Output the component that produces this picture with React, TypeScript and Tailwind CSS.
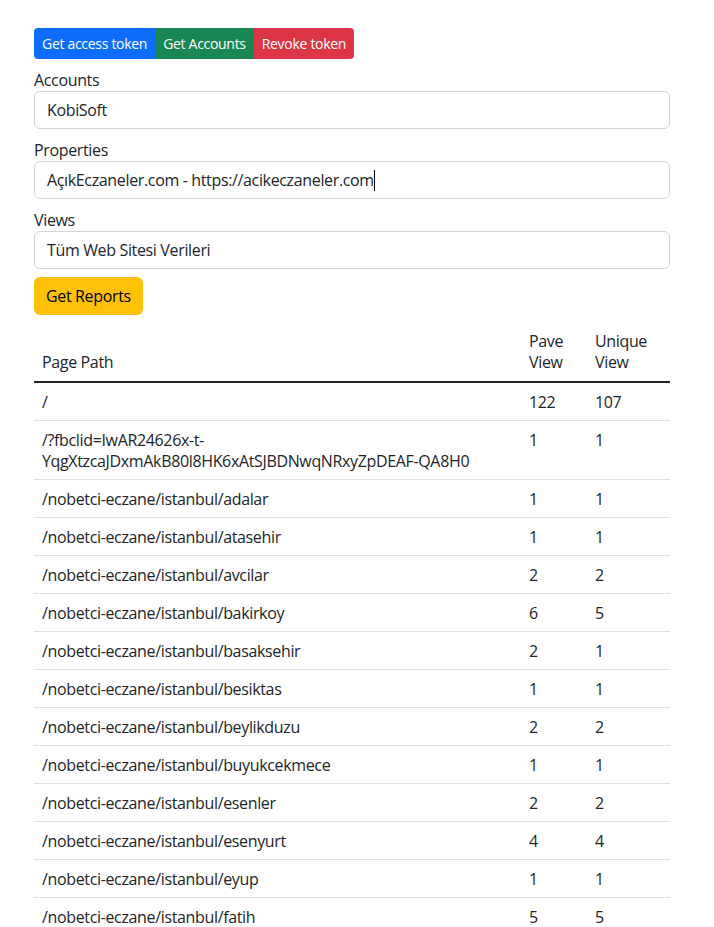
import React from "react";

const rows: [React.ReactNode, number, number][] = [
  ["/", 122, 107],
  [
    <>
      /?fbclid=IwAR24626x-t-
      <br />
      YqgXtzcaJDxmAkB80l8HK6xAtSJBDNwqNRxyZpDEAF-QA8H0
    </>,
    1,
    1,
  ],
  ["/nobetci-eczane/istanbul/adalar", 1, 1],
  ["/nobetci-eczane/istanbul/atasehir", 1, 1],
  ["/nobetci-eczane/istanbul/avcilar", 2, 2],
  ["/nobetci-eczane/istanbul/bakirkoy", 6, 5],
  ["/nobetci-eczane/istanbul/basaksehir", 2, 1],
  ["/nobetci-eczane/istanbul/besiktas", 1, 1],
  ["/nobetci-eczane/istanbul/beylikduzu", 2, 2],
  ["/nobetci-eczane/istanbul/buyukcekmece", 1, 1],
  ["/nobetci-eczane/istanbul/esenler", 2, 2],
  ["/nobetci-eczane/istanbul/esenyurt", 4, 4],
  ["/nobetci-eczane/istanbul/eyup", 1, 1],
  ["/nobetci-eczane/istanbul/fatih", 5, 5],
];

function Field({ label, value, caret }: { label: string; value: string; caret?: boolean }) {
  return (
    <div className="mt-2">
      <div className="leading-6 pt-px -mb-px">{label}</div>
      <div className="h-[38px] border border-[#ced4da] rounded-[6px] px-3 flex items-center leading-6 bg-white">
        <span>{value}</span>
        {caret && <span className="inline-block w-px h-[21px] bg-black" />}
      </div>
    </div>
  );
}

export default function App() {
  return (
    <div
      className="bg-white text-[#212529] text-[16px] tracking-[-0.35px] min-h-screen"
      style={{ fontFamily: '"Open Sans", "Noto Sans", sans-serif' }}
    >
      <div className="w-[636px] ml-[34px] pt-[28px] pb-8">
        <div className="flex text-[14px] leading-[21px] text-white tracking-[-0.3px]">
          <button className="bg-[#0d6efd] px-2 py-[5px] rounded-l-[4px]">Get access token</button>
          <button className="bg-[#198754] px-2 py-[5px]">Get Accounts</button>
          <button className="bg-[#dc3545] px-2 py-[5px] rounded-r-[4px]">Revoke token</button>
        </div>

        <Field label="Accounts" value="KobiSoft" />
        <Field label="Properties" value="AçıkEczaneler.com - https://acikeczaneler.com" caret />
        <Field label="Views" value="Tüm Web Sitesi Verileri" />

        <button className="mt-2 h-[38px] px-3 bg-[#ffc107] rounded-[6px] text-black leading-6">
          Get Reports
        </button>

        <table className="mt-2 w-full table-fixed border-collapse leading-[21px]">
          <thead>
            <tr className="border-b-2 border-[#212529]">
              <th className="text-left font-normal align-bottom p-2">Page Path</th>
              <th className="text-left font-normal align-bottom p-2 w-[66px]">Pave View</th>
              <th className="text-left font-normal align-bottom p-2 w-[83px]">Unique View</th>
            </tr>
          </thead>
          <tbody>
            {rows.map(([path, pv, uv], i) => (
              <tr key={i} className="border-b border-[#dee2e6]">
                <td className="px-2 pt-[9px] pb-[7px] align-top">{path}</td>
                <td className="px-2 pt-[9px] pb-[7px] align-top">{pv}</td>
                <td className="px-2 pt-[9px] pb-[7px] align-top">{uv}</td>
              </tr>
            ))}
          </tbody>
        </table>
      </div>
    </div>
  );
}
